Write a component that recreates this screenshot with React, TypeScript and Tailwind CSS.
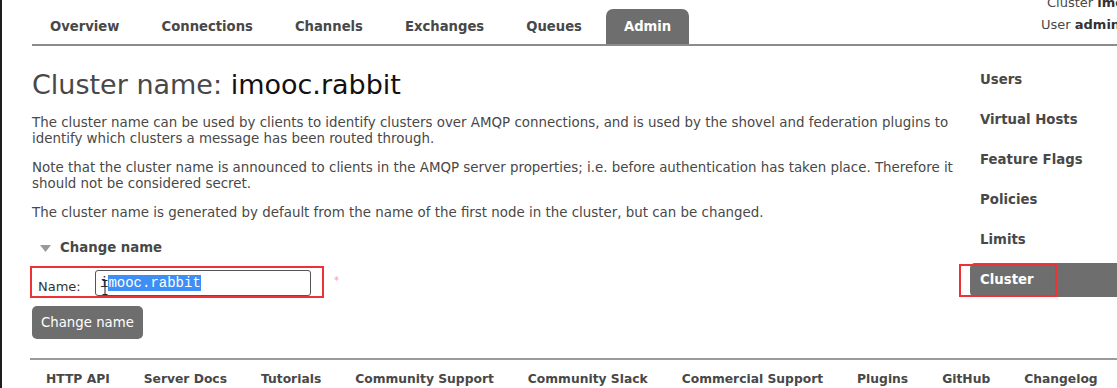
import React from "react";

const tabs = ["Overview", "Connections", "Channels", "Exchanges", "Queues", "Admin"];
const sideItems = ["Users", "Virtual Hosts", "Feature Flags", "Policies", "Limits", "Cluster"];
const footerLinks = [
  "HTTP API",
  "Server Docs",
  "Tutorials",
  "Community Support",
  "Community Slack",
  "Commercial Support",
  "Plugins",
  "GitHub",
  "Changelog",
];

const App = () => {
  return (
    <div className="h-[388px] w-[1117px] overflow-hidden border-l-2 border-[#1e1e1e] bg-white font-['DejaVu_Sans',Verdana,sans-serif] text-[#484848]">
      {/* Header / tabs */}
      <div className="ml-[30px] flex h-[46px] border-b-2 border-[#8c8c8c]">
        <ul className="flex items-end gap-[6px]">
          {tabs.map((tab) => (
            <li
              key={tab}
              className={`flex h-[35px] items-center px-[18px] text-[13.2px] font-bold ${
                tab === "Admin" ? "rounded-t-[7px] bg-[#6e6e6e] text-white" : "text-[#484848]"
              }`}
            >
              {tab}
            </li>
          ))}
        </ul>
        <div className="ml-auto -mt-[8px] w-[76px] shrink-0 whitespace-nowrap text-[13px] leading-[22px]">
          <div className="pl-[6px]">
            Cluster <b className="text-[#333]">imooc.rabbit</b>
          </div>
          <div>
            User <b className="text-[#333]">admin</b>
          </div>
        </div>
      </div>

      {/* Body */}
      <div className="flex">
        <div className="ml-[30px] w-[938px]">
          <h1 className="mt-[23px] text-[27px] leading-[32px] font-normal text-[#484848]">
            Cluster name: <span className="text-[#111]">imooc.rabbit</span>
          </h1>
          <p className="mt-[14px] text-[13.4px] leading-[16px]">
            The cluster name can be used by clients to identify clusters over AMQP connections, and is used by the shovel and federation plugins to identify which clusters a message has been routed through.
          </p>
          <p className="mt-[13px] text-[13.4px] leading-[16px]">
            Note that the cluster name is announced to clients in the AMQP server properties; i.e. before authentication has taken place. Therefore it should not be considered secret.
          </p>
          <p className="mt-[13px] text-[13.4px] leading-[16px]">
            The cluster name is generated by default from the name of the first node in the cluster, but can be changed.
          </p>

          {/* Change name form */}
          <div className="mt-[19px] flex h-[16px] items-center pl-[8px]">
            <svg width="11" height="7" viewBox="0 0 11 7" className="mr-[9px]">
              <path d="M0 0 H11 L5.5 7 Z" fill="#9a9a9a" />
            </svg>
            <span className="text-[13.3px] font-bold">Change name</span>
          </div>

          <div className="relative mt-[14px] flex h-[26px] items-end">
            <span className="w-[63px] pb-[1px] pl-[6px] text-[13px] leading-[16px] text-[#333]">Name:</span>
            <div className="relative flex h-[26px] w-[216px] items-center rounded-[3px] border border-[#555] pl-[4px] font-['Liberation_Mono',monospace] text-[14px] leading-[16px]">
              <span className="text-[#333]">i</span>
              <span className="bg-[#3d8ef5] text-white">mooc.rabbit</span>
              <svg width="6" height="15" viewBox="0 0 6 15" className="absolute left-[6px] top-[9px]">
                <path d="M0.5 0.5 H5.5 M3 0.5 V14.5 M0.5 14.5 H5.5" stroke="#222" strokeWidth="1" fill="none" />
              </svg>
            </div>
            <span className="ml-[23px] self-start mt-[5px] text-[10px] leading-[12px] text-[#f2a3a3]">*</span>
            <div className="pointer-events-none absolute -left-[2px] -top-[4px] h-[32px] w-[294px] border-2 border-[#ec3237]" />
          </div>

          <button className="mt-[10px] h-[33px] rounded-[5px] bg-[#6e6e6e] px-[9px] text-[13.3px] text-white">
            Change name
          </button>
        </div>

        {/* Sidebar */}
        <ul className="flex flex-1 flex-col gap-[6px] pt-[17px]">
          {sideItems.map((item) => (
            <li
              key={item}
              className={`relative flex h-[34px] items-center pl-[10px] text-[13.3px] font-bold ${
                item === "Cluster" ? "rounded-l-[5px] bg-[#6e6e6e] text-white" : "text-[#484848]"
              }`}
            >
              {item}
              {item === "Cluster" && (
                <div className="pointer-events-none absolute -left-[11px] top-[1px] h-[33px] w-[98px] border-2 border-[#ec3237]" />
              )}
            </li>
          ))}
        </ul>
      </div>

      {/* Footer */}
      <div className="ml-[28px] mt-[19px] border-t-2 border-[#9a9a9a] pt-[11px]">
        <ul className="flex gap-[34px] whitespace-nowrap pl-[16px] text-[12.3px] leading-[16px] font-bold text-[#484848]">
          {footerLinks.map((link) => (
            <li key={link}>{link}</li>
          ))}
        </ul>
      </div>
    </div>
  );
};

export default App;
